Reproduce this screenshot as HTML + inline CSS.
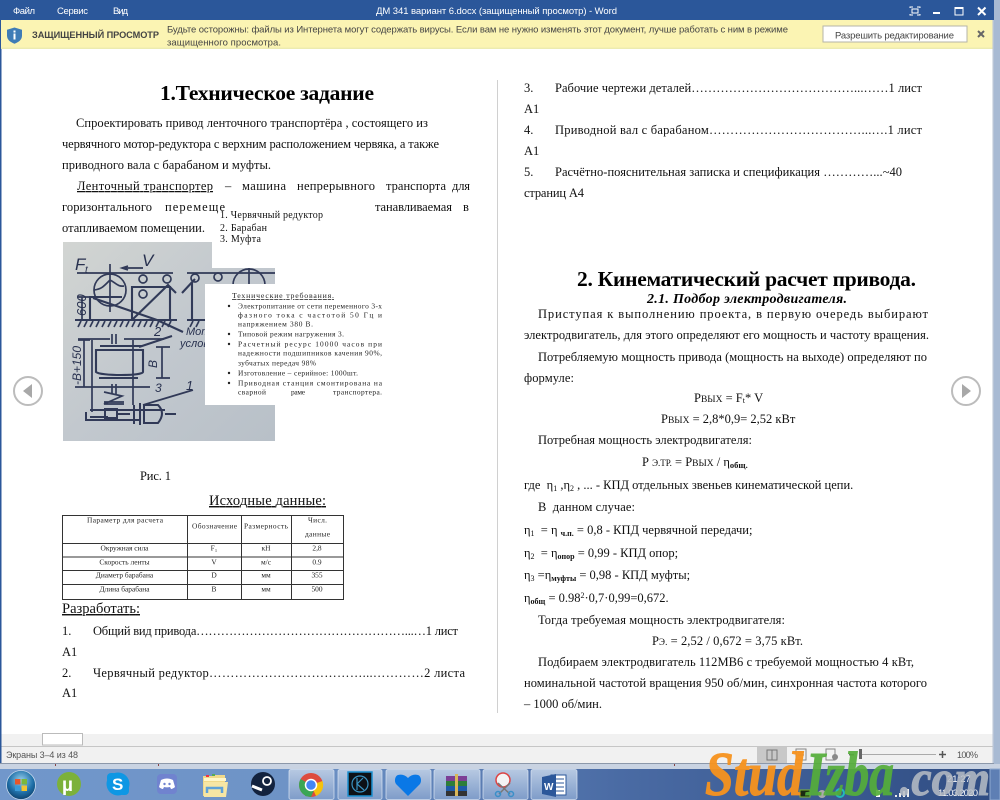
<!DOCTYPE html>
<html><head><meta charset="utf-8"><style>
html,body{margin:0;padding:0;width:1000px;height:800px;overflow:hidden;background:#fff}
svg{display:block;filter:blur(.35px)}
text{font-family:"Liberation Serif",serif;fill:#111;font-size:12.5px;white-space:pre}
.u text{font-family:"Liberation Sans",sans-serif;font-size:9.5px}
.h{font-weight:bold;font-size:21.5px;fill:#000}
.sm{font-size:10px}
.t7{font-size:7.4px;fill:#222}
.t8{font-size:7.8px;fill:#222}
.c{text-anchor:middle}
.ul{text-decoration:underline}
.sk{font-family:"Liberation Sans",sans-serif;font-style:italic;fill:#28314f}
</style></head><body>
<svg width="1000" height="800" viewBox="0 0 1000 800" xmlns="http://www.w3.org/2000/svg">
<defs>
<linearGradient id="tb" x1="0" x2="1" y1="0" y2="0"><stop offset="0" stop-color="#7197cb"/><stop offset=".3" stop-color="#6e93c6"/><stop offset=".62" stop-color="#4a6ba4"/><stop offset="1" stop-color="#2f4c82"/></linearGradient>
<linearGradient id="btn" x1="0" x2="0" y1="0" y2="1"><stop offset="0" stop-color="#b7c9e2"/><stop offset="1" stop-color="#7e9cc9"/></linearGradient>
<radialGradient id="orb" cx=".5" cy=".35" r=".7"><stop offset="0" stop-color="#9ad2ee"/><stop offset=".6" stop-color="#1e6fa8"/><stop offset="1" stop-color="#0b3860"/></radialGradient>
<linearGradient id="ph" x1="0" x2="1" y1="0" y2="1"><stop offset="0" stop-color="#d2d5d2"/><stop offset=".5" stop-color="#c2c8ce"/><stop offset="1" stop-color="#b8c0c8"/></linearGradient>
</defs>

<!-- window chrome -->
<rect width="1000" height="800" fill="#fff"/>
<rect x="994" y="0" width="6" height="770" fill="#a8bad3"/>
<rect x="0" y="0" width="994" height="20" fill="#2b579a"/>
<rect x="0" y="20" width="1.5" height="743" fill="#2b579a"/>
<rect x="1" y="20" width="993" height="28" fill="#fbf4b3"/>
<rect x="1" y="47.5" width="993" height="1.5" fill="#ecebb0"/>
<rect x="992.5" y="20" width="1.5" height="745" fill="#b8c4d6"/>
<rect x="823" y="26" width="144" height="16" fill="#fff" stroke="#b5b5a8"/>

<g class="u">
<text x="13" y="14" style="fill:#fff" textLength="22">Файл</text>
<text x="57" y="14" style="fill:#fff" textLength="31">Сервис</text>
<text x="113" y="14" style="fill:#fff" textLength="15">Вид</text>
<text x="376" y="14" style="fill:#fff" textLength="241">ДМ 341 вариант 6.docx (защищенный просмотр) - Word</text>
<text x="32" y="38" style="fill:#444;font-weight:bold;font-size:9.2px" textLength="127">ЗАЩИЩЕННЫЙ ПРОСМОТР</text>
<text x="167" y="32.5" style="fill:#444" textLength="621">Будьте осторожны: файлы из Интернета могут содержать вирусы. Если вам не нужно изменять этот документ, лучше работать с ним в режиме</text>
<text x="167" y="45.5" style="fill:#444" textLength="114">защищенного просмотра.</text>
<text x="835" y="38.5" style="fill:#444" textLength="119">Разрешить редактирование</text>
</g>
<path d="M14.5 27.5l7.5 2.3v6c0 4-3.5 6.500-7.500 8-4-1.500-7.500-4-7.500-8v-6z" fill="#3f7cb6"/>
<rect x="13.500" y="33.500" width="2" height="6" fill="#fff"/><rect x="13.500" y="30.500" width="2" height="2" fill="#fff"/>
<path d="M978 31l6 6M984 31l-6 6" stroke="#666" stroke-width="2"/>
<path d="M910 8v-1h3M917 7h3v1M920 14v1h-3M913 15h-3v-1" stroke="#fff" fill="none"/><rect x="912" y="9" width="6" height="4" fill="none" stroke="#fff"/>
<rect x="933" y="12" width="7" height="2" fill="#fff"/>
<rect x="955" y="7.500" width="8" height="7.500" fill="none" stroke="#fff"/><rect x="955" y="7" width="8" height="2" fill="#fff"/>
<path d="M978 7.500l7.500 7.500M985.500 7.500l-7.500 7.500" stroke="#fff" stroke-width="2"/>

<!-- divider -->
<rect x="497" y="80" width="1" height="633" fill="#d0d0d0"/>

<!-- left page text -->
<text class="h" x="160" y="100" textLength="214">1.Техническое задание</text>
<text x="76" y="127" textLength="352">Спроектировать привод ленточного транспортёра , состоящего из</text>
<text x="62" y="148" textLength="377">червячного мотор-редуктора с верхним расположением червяка, а также</text>
<text x="62" y="169" textLength="209">приводного вала с барабаном и муфты.</text>
<text class="ul" x="77" y="190" textLength="136">Ленточный транспортер</text>
<text x="225" y="190">–</text>
<text x="242" y="190" textLength="44">машина</text>
<text x="297" y="190" textLength="78">непрерывного</text>
<text x="386" y="190" textLength="60">транспорта</text>
<text x="452" y="190" textLength="18">для</text>
<text x="62" y="211" textLength="90">горизонтального</text>
<text x="165" y="211" textLength="60">перемеще</text>
<text x="375" y="211" textLength="77">танавливаемая</text>
<text x="463" y="211">в</text>
<text x="62" y="232" textLength="143">отапливаемом помещении.</text>

<text class="sm" x="220" y="218" textLength="103">1. Червячный редуктор</text>
<text class="sm" x="220" y="231" textLength="47">2. Барабан</text>
<text class="sm" x="220" y="242" textLength="41">3. Муфта</text>

<!-- sketch photo -->
<path d="M63 242H212V268H275V441H63z" fill="url(#ph)"/>
<g fill="none" stroke="#252e4e" stroke-width="1.700" opacity=".92">
<path d="M77 273H173M187 273H275M122 268H143M128 266l-6 2 6 2"/>
<circle cx="110" cy="290" r="16"/><path d="M110 264V312M94 290c8-1 10-4 16-10 6 3 8 7 14 6"/>
<circle cx="143" cy="279" r="4"/><circle cx="167" cy="279" r="4"/><circle cx="143" cy="294" r="4"/>
<circle cx="195" cy="278" r="4"/><circle cx="218" cy="277" r="4"/><path d="M233 285a16 16 0 0 1 32 0"/><path d="M249 268V285"/>
<path d="M90 320V297H122M132 320V287H170V320M93 298L157 320 183 332M132 320L168 285 176 293M182 293L195 279M192 282V320M215 284V320M75 320H177M187 320H275" stroke-width="2.100"/>
<path d="M78 327l3-6M84 327l3-6M90 327l3-6M96 327l3-6M102 327l3-6M108 327l3-6M114 327l3-6M120 327l3-6M126 327l3-6M132 327l3-6M138 327l3-6M144 327l3-6M150 327l3-6M156 327l3-6M162 327l3-6M168 327l3-6M190 327l3-6M196 327l3-6"/>
<path d="M82 297V320M78 297H92M78 320H88"/>
<path d="M78 339H110M124 339H164M112 334V344M116 334V344M84 340V387M78 340H90M92 340V412M133 340V405"/>
<path d="M96 350H143V372C143 376 100 376 96 372zM100 346H142M99 378H138M139 347L172 336" stroke-width="2.100"/>
<path d="M162 347V378M156 347H170M156 378H170M75 387H150M112 384V394M116 384V394M104 392L122 396 104 404 124 404M104 402H124M193 390L143 405"/>
<path d="M90 410H165M86 412V420H140M105 409H117V418H105zM90 417H108M118 414H130M134 405V424M140 403V425M144 405H158Q166 413 158 423H144zM165 414H176" stroke-width="2"/>
</g>
<text class="sk" x="75" y="270" style="font-size:17px">F</text>
<text class="sk" x="85" y="273" style="font-size:10px">t</text>
<text class="sk" x="142" y="266" style="font-size:17px">V</text>
<text class="sk" x="154" y="336" style="font-size:13px">2</text>
<text class="sk" x="155" y="392" style="font-size:12px">3</text>
<text class="sk" x="186" y="390" style="font-size:13px">1</text>
<text class="sk" x="186" y="335" style="font-size:11px">Mom</text>
<text class="sk" x="180" y="347" style="font-size:11px">услов</text>
<text class="sk" transform="translate(86,316) rotate(-90)" style="font-size:13px">600</text>
<text class="sk" transform="translate(81,385) rotate(-90)" style="font-size:12px">-B+150</text>
<text class="sk" transform="translate(157,368) rotate(-90)" style="font-size:12px">B</text>

<!-- tech requirements -->
<rect x="205" y="284" width="182" height="121" fill="#fff"/>
<text class="t8 ul" x="232" y="298" textLength="102">Технические требования.</text>
<g fill="#222"><circle cx="229" cy="306" r="1.200"/><circle cx="229" cy="334" r="1.200"/><circle cx="229" cy="344" r="1.200"/><circle cx="229" cy="373" r="1.200"/><circle cx="229" cy="383" r="1.200"/></g>
<text class="t7" x="238" y="308.500" textLength="144">Электропитание от сети переменного 3-х</text>
<text class="t7" x="238" y="317.500" textLength="144">фазного тока с частотой 50 Гц и</text>
<text class="t7" x="238" y="326.500" textLength="75">напряжением 380 В.</text>
<text class="t7" x="238" y="336.500" textLength="106">Типовой режим нагружения 3.</text>
<text class="t7" x="238" y="346.500" textLength="144">Расчетный ресурс 10000 часов при</text>
<text class="t7" x="238" y="355.500" textLength="144">надежности подшипников качения 90%,</text>
<text class="t7" x="238" y="365.500" textLength="78">зубчатых передач 98%</text>
<text class="t7" x="238" y="375.500" textLength="120">Изготовление – серийное: 1000шт.</text>
<text class="t7" x="238" y="385.500" textLength="144">Приводная станция смонтирована на</text>
<text class="t7" x="238" y="394.500" textLength="28">сварной</text>
<text class="t7" x="291" y="394.500" textLength="14">раме</text>
<text class="t7" x="333" y="394.500" textLength="49">транспортера.</text>

<text x="140" y="480" textLength="31">Рис. 1</text>
<text class="ul" x="209" y="505" style="font-size:14.500px" textLength="117">Исходные данные:</text>

<!-- table -->
<g stroke="#333" fill="none" stroke-width="1">
<rect x="62.500" y="515.500" width="281" height="84"/>
<path d="M187.500 515V599M241.500 515V599M291.500 515V599M62 543.500H344M62 557H344M62 570.500H344M62 584.500H344"/>
</g>
<text class="t7" x="87" y="522.500" textLength="76">Параметр для расчета</text>
<text class="t7" x="192" y="528.500" textLength="45">Обозначение</text>
<text class="t7" x="244" y="528.500" textLength="44">Размерность</text>
<text class="t7" x="308" y="522.500" textLength="19">Числ.</text>
<text class="t7" x="305" y="536.500" textLength="25">данные</text>
<text class="t7 c" x="124.500" y="550.500">Окружная сила</text><text class="t7 c" x="214" y="550.500">F₁</text><text class="t7 c" x="266" y="550.500">кН</text><text class="t7 c" x="317" y="550.500">2,8</text>
<text class="t7 c" x="124.500" y="564.500">Скорость ленты</text><text class="t7 c" x="214" y="564.500">V</text><text class="t7 c" x="266" y="564.500">м/с</text><text class="t7 c" x="317" y="564.500">0.9</text>
<text class="t7 c" x="124.500" y="577.500">Диаметр барабана</text><text class="t7 c" x="214" y="577.500">D</text><text class="t7 c" x="266" y="577.500">мм</text><text class="t7 c" x="317" y="577.500">355</text>
<text class="t7 c" x="124.500" y="591.500">Длина барабана</text><text class="t7 c" x="214" y="591.500">B</text><text class="t7 c" x="266" y="591.500">мм</text><text class="t7 c" x="317" y="591.500">500</text>
<text class="ul" x="62" y="613" style="font-size:14.500px" textLength="78">Разработать:</text>
<text x="62" y="635">1.</text>
<text x="93" y="635" textLength="365">Общий вид привода……………………………………………...…1 лист</text>
<text x="62" y="656">А1</text>
<text x="62" y="677">2.</text>
<text x="93" y="677" textLength="372">Червячный редуктор………………………………...…………2 листа</text>
<text x="62" y="697">А1</text>

<!-- right page -->
<text x="524" y="92">3.</text>
<text x="555" y="92" textLength="367">Рабочие чертежи деталей…………………………………...……1 лист</text>
<text x="524" y="113">А1</text>
<text x="524" y="134">4.</text>
<text x="555" y="134" textLength="367">Приводной вал с барабаном………………………………...….1 лист</text>
<text x="524" y="155">А1</text>
<text x="524" y="176">5.</text>
<text x="555" y="176" textLength="347">Расчётно-пояснительная записка и спецификация …………...~40</text>
<text x="524" y="197" textLength="60">страниц А4</text>

<text class="h" x="577" y="286" textLength="339">2. Кинематический расчет привода.</text>
<text x="647" y="303" style="font-weight:bold;font-style:italic;font-size:14px;fill:#000" textLength="200">2.1. Подбор электродвигателя.</text>
<text x="538" y="318" textLength="390">Приступая к выполнению проекта, в первую очередь выбирают</text>
<text x="524" y="339" textLength="405">электродвигатель, для этого определяют его мощность и частоту вращения.</text>
<text x="538" y="361" textLength="389">Потребляемую мощность привода (мощность на выходе) определяют по</text>
<text x="524" y="382" textLength="50">формуле:</text>
<text x="694" y="402">Р<tspan font-size="9.500">ВЫХ</tspan> = F<tspan font-size="8" dy="1">t</tspan><tspan dy="-1">* V</tspan></text>
<text x="661" y="423">Р<tspan font-size="9.500">ВЫХ</tspan> = 2,8*0,9= 2,52 кВт</text>
<text x="538" y="444" textLength="214">Потребная мощность электродвигателя:</text>
<text x="642" y="466">Р <tspan font-size="9">Э.ТР.</tspan> = Р<tspan font-size="9.500">ВЫХ</tspan> / η<tspan font-size="8.500" dy="2" font-weight="bold">общ.</tspan></text>
<text x="524" y="489">где  η<tspan font-size="8" dy="2">1</tspan><tspan dy="-2"> ,η</tspan><tspan font-size="8" dy="2">2</tspan><tspan dy="-2"> , ... - КПД отдельных звеньев кинематической цепи.</tspan></text>
<text x="538" y="511" textLength="97">В  данном случае:</text>
<text x="524" y="534">η<tspan font-size="8" dy="2">1</tspan><tspan dy="-2">  = η </tspan><tspan font-size="8" dy="2" font-weight="bold">ч.п.</tspan><tspan dy="-2"> = 0,8 - КПД червячной передачи;</tspan></text>
<text x="524" y="557">η<tspan font-size="8" dy="2">2</tspan><tspan dy="-2">  = η</tspan><tspan font-size="8" dy="2" font-weight="bold">опор</tspan><tspan dy="-2"> = 0,99 - КПД опор;</tspan></text>
<text x="524" y="579">η<tspan font-size="8" dy="2">3</tspan><tspan dy="-2"> =η</tspan><tspan font-size="8" dy="2" font-weight="bold">муфты</tspan><tspan dy="-2"> = 0,98 - КПД муфты;</tspan></text>
<text x="524" y="602">η<tspan font-size="8" dy="2" font-weight="bold">общ</tspan><tspan dy="-2"> = 0.98</tspan><tspan font-size="8" dy="-4">2</tspan><tspan dy="4">·0,7·0,99=0,672.</tspan></text>
<text x="538" y="624" textLength="247">Тогда требуемая мощность электродвигателя:</text>
<text x="652" y="645" textLength="151">Р<tspan font-size="9">Э.</tspan> = 2,52 / 0,672 = 3,75 кВт.</text>
<text x="538" y="666" textLength="376">Подбираем электродвигатель 112МВ6 с требуемой мощностью 4 кВт,</text>
<text x="524" y="687" textLength="403">номинальной частотой вращения 950 об/мин, синхронная частота которого</text>
<text x="524" y="708" textLength="78">– 1000 об/мин.</text>

<!-- nav arrows -->
<circle cx="28" cy="391" r="14" fill="#fff" stroke="#bcbcbc" stroke-width="2"/><path d="M23 391l9-7v14z" fill="#a8a8a8"/>
<circle cx="966" cy="391" r="14" fill="#fff" stroke="#bcbcbc" stroke-width="2"/><path d="M971 391l-9-7v14z" fill="#a8a8a8"/>

<!-- bottom bars -->
<rect x="1.500" y="734" width="991" height="29" fill="#f1f1f1"/>
<rect x="1.500" y="746" width="991" height="1" fill="#c6c6c6"/>
<rect x="42.500" y="733.500" width="40" height="11.500" fill="#fff" stroke="#bbb"/>
<text x="6" y="758" style="font-family:'Liberation Sans';font-size:9px;fill:#555" textLength="72">Экраны 3–4 из 48</text>
<rect x="757" y="747" width="30" height="16" fill="#c8c8c8"/>
<path d="M767 750h5v10h-5zM772 750h5v10h-5z" fill="none" stroke="#777"/>
<rect x="796" y="749" width="10" height="11" fill="none" stroke="#888"/><path d="M798 752h6M798 755h6" stroke="#888"/>
<rect x="826" y="749" width="9" height="11" fill="none" stroke="#888"/><circle cx="835" cy="757" r="3" fill="#888"/>
<rect x="849" y="754" width="5" height="1.500" fill="#666"/><rect x="859" y="749" width="3" height="10" fill="#666"/><rect x="862" y="754" width="74" height="1" fill="#aaa"/>
<path d="M939 754.500h7M942.500 751v7" stroke="#555" stroke-width="1.500"/>
<text x="957" y="758" style="font-family:'Liberation Sans';font-size:9px;fill:#555" textLength="21">100%</text>
<rect x="0" y="763" width="994" height="1" fill="#8c98aa"/>
<rect x="0" y="764" width="1000" height="5" fill="#c9d3e2"/>
<rect x="55" y="764" width="1" height="2" fill="#844"/><rect x="158" y="764" width="1" height="2" fill="#844"/><rect x="674" y="764" width="1" height="2" fill="#844"/>

<!-- taskbar -->
<rect x="0" y="769" width="1000" height="31" fill="url(#tb)"/>
<rect x="990" y="769" width="10" height="31" fill="#5e7fb4" stroke="#8ea9cf"/>
<g fill="url(#btn)" stroke="#dce6f3" stroke-opacity=".7">
<rect x="289" y="769.500" width="45" height="30" rx="2"/><rect x="338" y="769.500" width="44" height="30" rx="2"/><rect x="386" y="769.500" width="45" height="30" rx="2"/><rect x="434" y="769.500" width="46" height="30" rx="2"/><rect x="483" y="769.500" width="45" height="30" rx="2"/><rect x="531" y="769.500" width="46" height="30" rx="2"/>
</g>
<circle cx="21" cy="785" r="14.500" fill="url(#orb)" stroke="#c6d8ec" stroke-width=".8"/>
<rect x="15" y="779" width="5.500" height="5.500" fill="#e8562a"/><rect x="21.500" y="779" width="5.500" height="5.500" fill="#7ab83a"/><rect x="15" y="785.500" width="5.500" height="5.500" fill="#3a9ad8"/><rect x="21.500" y="785.500" width="5.500" height="5.500" fill="#f2c530"/>
<circle cx="69" cy="784" r="12" fill="#7cb13a"/><text x="62" y="791" style="font-family:'Liberation Sans';font-weight:bold;font-size:19px;fill:#fff">µ</text>
<circle cx="118" cy="784" r="11.500" fill="#0e97e4"/><rect x="107" y="773" width="10" height="10" rx="4" fill="#0e97e4"/><rect x="119" y="785" width="10" height="10" rx="4" fill="#0e97e4"/><text x="112" y="790" style="font-family:'Liberation Sans';font-weight:bold;font-size:17px;fill:#fff">S</text>
<rect x="157" y="774" width="20" height="20" rx="4" fill="#7083cf"/><path d="M161 780c4-2 8-2 12 0l2 7c-1 1-3 2-4 2l-1-2c-2 .5-4 .5-6 0l-1 2c-1 0-3-1-4-2z" fill="#fff"/><circle cx="164.500" cy="784" r="1.200" fill="#7083cf"/><circle cx="169.500" cy="784" r="1.200" fill="#7083cf"/>
<path d="M203 776h9l2-1h11v21h-22z" fill="#f0d98a"/><rect x="204" y="778" width="22" height="3" fill="#fff6c8"/><rect x="206" y="775" width="3" height="2" fill="#e34"/><rect x="212" y="774" width="3" height="2" fill="#5a5"/><path d="M204 782h24l-2 15h-22z" fill="#f7e6a4"/><path d="M207 793v-5h15v5" fill="none" stroke="#5fa2d8" stroke-width="2.500"/>
<circle cx="263" cy="784" r="12" fill="#13233f"/><circle cx="267" cy="781" r="4" fill="none" stroke="#fff" stroke-width="1.800"/><path d="M252 786l10 4" stroke="#fff" stroke-width="3"/>
<circle cx="311" cy="785" r="12" fill="#dd4b3e"/><path d="M311 785L300.600 779a12 12 0 0 0 5.400 16.900z" fill="#3aa655"/><path d="M311 785l5 11a12 12 0 0 0 6.500-15z" fill="#f4c20d"/><path d="M305 796l6-11 5 .5-5 11.500z" fill="#3aa655"/><circle cx="311" cy="785" r="5.500" fill="#4285f4" stroke="#fff" stroke-width="1.500"/>
<rect x="348" y="772" width="24" height="24" fill="#0d1116" stroke="#1a8fd0" stroke-width="1.500"/><circle cx="360" cy="784" r="8" fill="none" stroke="#3a93c2" stroke-width="1.200"/><path d="M357 778v12M363 778l-6 6 7 6" fill="none" stroke="#3a93c2" stroke-width="1.200"/>
<path d="M408 796l-12-12c-2-3-1-8 2-9 4-1 7 0 10 3 3-3 6-4 10-3 3 1 4 6 2 9z" fill="#0a78e6"/>
<rect x="446" y="776" width="21" height="5" fill="#7c3f96"/><rect x="446" y="781" width="21" height="5" fill="#2d7d3a"/><rect x="446" y="786" width="21" height="5" fill="#1e5aa8"/><rect x="446" y="791" width="21" height="5" fill="#333"/><rect x="455" y="774" width="3" height="22" fill="#d9b75a"/>
<circle cx="503" cy="780" r="7" fill="#f4f4f4" stroke="#d44" stroke-width="1.500"/><path d="M498 783l12 11M510 783l-11 11" stroke="#777" stroke-width="1.500"/><circle cx="498" cy="794" r="2.500" fill="none" stroke="#3a8fc8" stroke-width="1.500"/><circle cx="511" cy="794" r="2.500" fill="none" stroke="#3a8fc8" stroke-width="1.500"/>
<rect x="551" y="775" width="15" height="20" fill="#fff" stroke="#2b579a"/><path d="M556 779h8M556 783h8M556 787h8M556 791h8" stroke="#2b579a"/><path d="M542 777l14-3v23l-14-3z" fill="#2b579a"/><text x="544" y="790" style="font-family:'Liberation Sans';font-weight:bold;font-size:10px;fill:#fff">W</text>

<!-- tray -->
<rect x="800" y="790" width="10" height="7" fill="#1a2a12" stroke="#7fb832"/><circle cx="822" cy="794" r="4" fill="#aaa"/><circle cx="840" cy="793" r="4" fill="none" stroke="#2bb" stroke-width="2"/><rect x="876" y="790" width="4" height="7" fill="#fff"/><path d="M895 797h2v-2h-2zM899 797h2v-4h-2zM903 797h2v-6h-2zM907 797h2v-8h-2z" fill="#eee"/>
<text x="947" y="782" style="font-family:'Liberation Sans';font-size:9.500px;fill:#fff">21:27</text>
<text x="938" y="796" style="font-family:'Liberation Sans';font-size:9.500px;fill:#fff" textLength="40">11.03.2020</text>

<!-- watermark -->
<text x="705" y="795" textLength="98" lengthAdjust="spacingAndGlyphs" style="font-size:62px;font-weight:bold;font-style:italic;fill:#f7931e;stroke:#f7931e;stroke-width:1;opacity:.95">Stud</text>
<text x="806" y="795" textLength="88" lengthAdjust="spacingAndGlyphs" style="font-size:62px;font-weight:bold;font-style:italic;fill:#55ae3a;stroke:#55ae3a;stroke-width:1;opacity:.92">Izba</text>
<text x="900" y="795" textLength="90" lengthAdjust="spacingAndGlyphs" style="font-size:50px;font-weight:bold;font-style:italic;fill:#b8bec6;stroke:#b8bec6;stroke-width:1;opacity:.85">.com</text>
</svg>
</body></html>
